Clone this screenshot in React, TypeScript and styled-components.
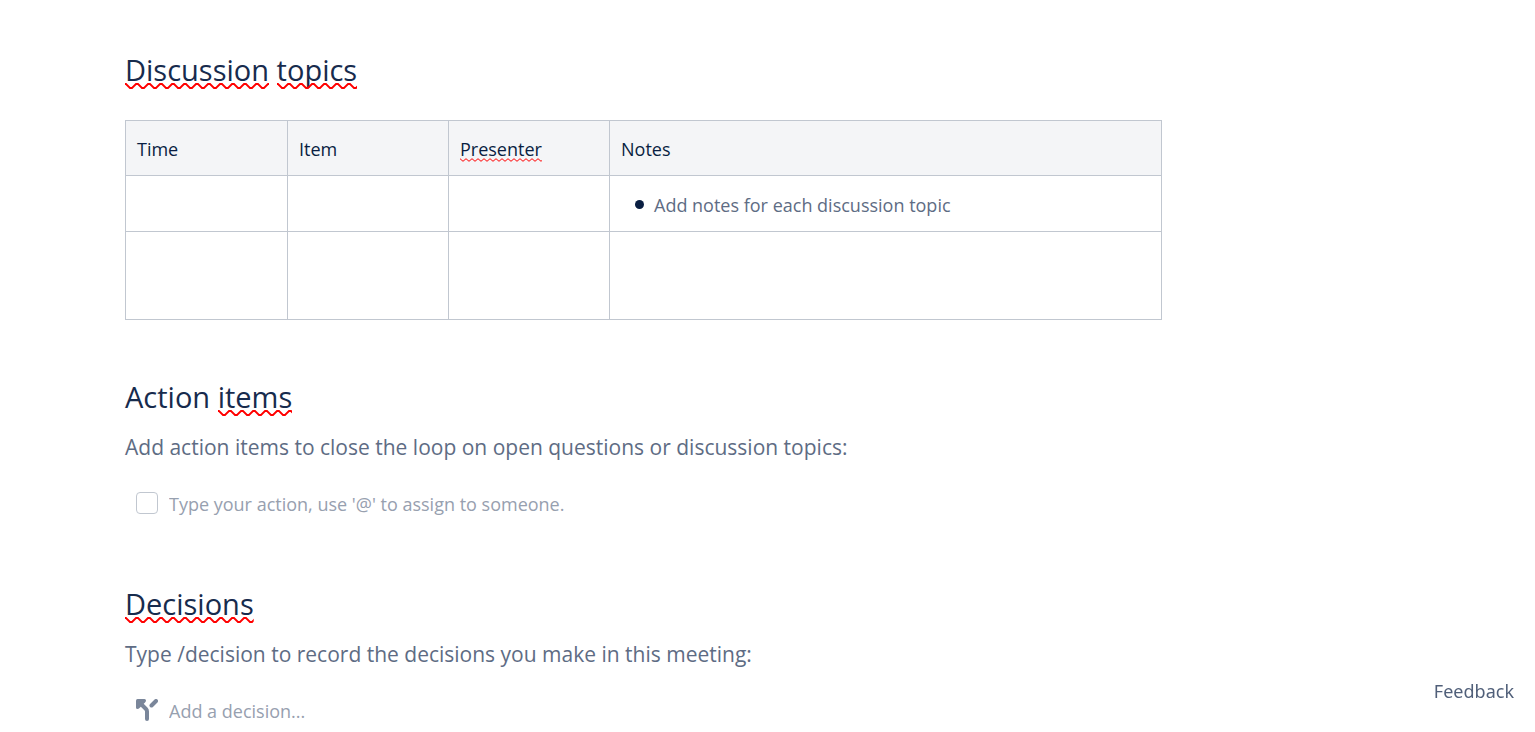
import React, { useId } from "react";
import styled, { createGlobalStyle } from "styled-components";

const GlobalStyle = createGlobalStyle`
  *, *::before, *::after { box-sizing: border-box; }
  body {
    margin: 0;
    background: #fff;
    color: #172b4d;
    font-family: "Segoe UI", "Open Sans", "Noto Sans", sans-serif;
    font-size: 18px;
    line-height: 32px;
  }
`;

const Page = styled.main`
  padding: 48px 373px 0 125px;
`;

const Section = styled.section<{ $gap?: number }>`
  margin-bottom: ${(p) => p.$gap ?? 0}px;
`;

const Heading = styled.h2`
  margin: 0;
  font-size: 29px;
  font-weight: 400;
  line-height: 44px;
`;

const Hint = styled.p`
  margin: 11px 0 0;
  color: #5e6c84;
  font-size: 21px;
  line-height: 34px;
`;

const Word = styled.span`
  position: relative;
  display: inline-block;
`;

const Wave = styled.svg`
  position: absolute;
  left: 0;
  bottom: 3px;
  width: 100%;
`;

const Table = styled.table`
  width: 100%;
  margin-top: 28px;
  border-collapse: collapse;
  table-layout: fixed;
`;

const Row = styled.tr<{ $height: number }>`
  height: ${(p) => p.$height}px;
`;

const HeadCell = styled.th`
  padding: 2px 11px 0;
  border: 1px solid #c1c7d0;
  background: #f4f5f7;
  color: #091e42;
  font-weight: 400;
  text-align: left;
`;

const Cell = styled.td`
  padding: 2px 11px 0;
  border: 1px solid #c1c7d0;
`;

const Column = styled.col<{ $width?: number }>`
  width: ${(p) => (p.$width ? `${p.$width}px` : "auto")};
`;

const Notes = styled.ul`
  margin: 0;
  padding: 0 0 0 14px;
  list-style: none;
  color: #5e6c84;
`;

const Note = styled.li`
  display: flex;
  align-items: center;
  gap: 10px;

  &::before {
    content: "";
    width: 9px;
    height: 9px;
    border-radius: 50%;
    background: #091e42;
  }
`;

const Entry = styled.div`
  display: flex;
  align-items: center;
  gap: 11px;
  margin-top: 23px;
  padding-left: 11px;
`;

const Tick = styled.input`
  appearance: none;
  flex: none;
  width: 22px;
  height: 22px;
  margin: 0;
  border: 1px solid #c1c7d0;
  border-radius: 4px;
  background: #fff;
`;

const EntryInput = styled.input`
  flex: 1;
  min-width: 0;
  height: 32px;
  padding: 2px 0 0;
  border: 0;
  outline: 0;
  background: none;
  color: #172b4d;
  font: inherit;

  &::placeholder {
    color: #97a0af;
    opacity: 1;
  }
`;

const DecisionIcon = styled.svg`
  flex: none;
  width: 22px;
  height: 22px;
`;

const Feedback = styled.button`
  position: fixed;
  right: 21px;
  bottom: 25px;
  padding: 0;
  border: 0;
  background: none;
  color: #505f79;
  font: 18px/32px "Segoe UI", "Noto Sans", sans-serif;
`;

function Misspelled({ children, small = false }: { children: string; small?: boolean }) {
  const id = useId();
  const period = small ? 6 : 12;
  const height = small ? 4 : 6;
  return (
    <Word>
      {children}
      <Wave height={height} aria-hidden="true">
        <defs>
          <pattern id={id} width={period} height={height} patternUnits="userSpaceOnUse">
            <path
              d={small ? "M-1.5 1.5 L0 .7 L3 3.3 L6 .7 L7.5 2" : "M-2 2.6 L-1 1 H1 L5 5 H7 L11 1 H13"}
              fill="none"
              stroke="#f00"
              strokeWidth={small ? 1 : 1.8}
            />
          </pattern>
        </defs>
        <rect width="100%" height={height} fill={`url(#${id})`} />
      </Wave>
    </Word>
  );
}

export default function App() {
  return (
    <>
      <GlobalStyle />
      <Page>
        <Section $gap={55}>
          <Heading>
            <Misspelled>Discussion</Misspelled> <Misspelled>topics</Misspelled>
          </Heading>
          <Table>
            <colgroup>
              <Column $width={162} />
              <Column $width={161} />
              <Column $width={161} />
              <Column />
            </colgroup>
            <thead>
              <Row $height={55}>
                <HeadCell scope="col">Time</HeadCell>
                <HeadCell scope="col">Item</HeadCell>
                <HeadCell scope="col"><Misspelled small>Presenter</Misspelled></HeadCell>
                <HeadCell scope="col">Notes</HeadCell>
              </Row>
            </thead>
            <tbody>
              <Row $height={56}>
                <Cell />
                <Cell />
                <Cell />
                <Cell>
                  <Notes>
                    <Note>Add notes for each discussion topic</Note>
                  </Notes>
                </Cell>
              </Row>
              <Row $height={88}>
                <Cell />
                <Cell />
                <Cell />
                <Cell />
              </Row>
            </tbody>
          </Table>
        </Section>

        <Section $gap={63}>
          <Heading>
            Action <Misspelled>items</Misspelled>
          </Heading>
          <Hint>Add action items to close the loop on open questions or discussion topics:</Hint>
          <Entry>
            <Tick type="checkbox" aria-label="Action done" />
            <EntryInput
              type="text"
              aria-label="Action"
              placeholder="Type your action, use '@' to assign to someone."
            />
          </Entry>
        </Section>

        <Section>
          <Heading>
            <Misspelled>Decisions</Misspelled>
          </Heading>
          <Hint>Type /decision to record the decisions you make in this meeting:</Hint>
          <Entry>
            <DecisionIcon viewBox="0 0 22 22" aria-hidden="true">
              <g fill="none" stroke="#7a869a" strokeWidth="4" strokeLinecap="round" strokeLinejoin="round">
                <path d="M11 20 V12.5 Q11 11 10 10 L4 4" />
                <path d="M15.5 6.5 L20 2" />
              </g>
              <path
                d="M1.5 0 H8.5 Q10 0 10 1.5 Q10 2.5 9 3.5 L3.5 9 Q2.5 10 1.5 10 Q0 10 0 8.5 V1.5 Q0 0 1.5 0 Z"
                fill="#7a869a"
              />
            </DecisionIcon>
            <EntryInput type="text" aria-label="Decision" placeholder="Add a decision..." />
          </Entry>
        </Section>
      </Page>
      <Feedback type="button">Feedback</Feedback>
    </>
  );
}
